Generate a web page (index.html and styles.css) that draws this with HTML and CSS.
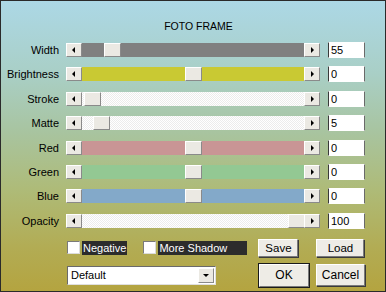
FILE: index.html
```html
<!DOCTYPE html>
<html lang="en">
<head>
  <meta charset="UTF-8">
  <title>Foto Frame</title>
  <link rel="stylesheet" href="styles.css">
</head>
<body>
  <div class="dialog">
    <h1 class="title">FOTO FRAME</h1>

    <!-- slider rows -->
    <div class="sliders">
      <div class="row">
        <span class="label">Width</span>
        <div class="scroll">
          <span class="arrow left"></span>
          <div class="track gray"><span class="thumb" style="left: 22px"></span></div>
          <span class="arrow right"></span>
        </div>
        <input class="value" type="text" value="55">
      </div>
      <div class="row">
        <span class="label">Brightness</span>
        <div class="scroll">
          <span class="arrow left"></span>
          <div class="track yellow"><span class="thumb" style="left: 103px"></span></div>
          <span class="arrow right"></span>
        </div>
        <input class="value" type="text" value="0">
      </div>
      <div class="row">
        <span class="label">Stroke</span>
        <div class="scroll">
          <span class="arrow left"></span>
          <div class="track light"><span class="thumb" style="left: 2px"></span></div>
          <span class="arrow right"></span>
        </div>
        <input class="value" type="text" value="0">
      </div>
      <div class="row">
        <span class="label">Matte</span>
        <div class="scroll">
          <span class="arrow left"></span>
          <div class="track light"><span class="thumb" style="left: 11px"></span></div>
          <span class="arrow right"></span>
        </div>
        <input class="value" type="text" value="5">
      </div>
      <div class="row">
        <span class="label">Red</span>
        <div class="scroll">
          <span class="arrow left"></span>
          <div class="track red"><span class="thumb" style="left: 103px"></span></div>
          <span class="arrow right"></span>
        </div>
        <input class="value caret" type="text" value="0">
      </div>
      <div class="row">
        <span class="label">Green</span>
        <div class="scroll">
          <span class="arrow left"></span>
          <div class="track green"><span class="thumb" style="left: 103px"></span></div>
          <span class="arrow right"></span>
        </div>
        <input class="value" type="text" value="0">
      </div>
      <div class="row">
        <span class="label">Blue</span>
        <div class="scroll">
          <span class="arrow left"></span>
          <div class="track blue"><span class="thumb" style="left: 103px"></span></div>
          <span class="arrow right"></span>
        </div>
        <input class="value" type="text" value="0">
      </div>
      <div class="row">
        <span class="label">Opacity</span>
        <div class="scroll">
          <span class="arrow left"></span>
          <div class="track light"><span class="thumb" style="left: 206px"></span></div>
          <span class="arrow right"></span>
        </div>
        <input class="value" type="text" value="100">
      </div>
    </div>

    <!-- options and buttons -->
    <div class="footer">
      <div class="line">
        <span class="check"></span>
        <span class="check-label negative">Negative</span>
        <span class="check second"></span>
        <span class="check-label shadow">More Shadow</span>
        <button class="btn save">Save</button>
        <button class="btn load">Load</button>
      </div>
      <div class="line second-line">
        <div class="select">
          <span class="select-text">Default</span>
          <span class="select-arrow"></span>
        </div>
        <button class="btn ok">OK</button>
        <button class="btn cancel">Cancel</button>
      </div>
    </div>
  </div>
</body>
</html>
```

FILE: styles.css
```css
* {
  box-sizing: border-box;
}

body {
  margin: 0;
  font-family: "Liberation Sans", Arial, sans-serif;
  font-size: 11px;
  color: #000;
}

.dialog {
  width: 386px;
  height: 292px;
  border: 1px solid #2a2a2a;
  background: linear-gradient(#acd8e6 0%, #a9cfc6 25%, #a8c4a0 45%, #aebb78 65%, #b2ac54 85%, #b4a440 100%);
  overflow: hidden;
}

.title {
  margin: 0;
  padding: 18px 0 0 11px;
  height: 32px;
  line-height: 14px;
  font-size: 10.5px;
  font-weight: normal;
  text-align: center;
}

/* slider rows */
.sliders {
  display: flex;
  flex-direction: column;
  gap: 10.4px;
  margin-top: 10px;
}

.row {
  display: flex;
  align-items: center;
  height: 14px;
}

.label {
  width: 58px;
  text-align: right;
  line-height: 14px;
}

.scroll {
  display: flex;
  width: 254px;
  height: 14px;
  margin-left: 7px;
}

.arrow {
  position: relative;
  width: 16px;
  height: 14px;
  background: #ebe9e3;
  border-top: 1px solid #fff;
  border-left: 1px solid #fff;
  border-right: 1px solid #8a8a8a;
  border-bottom: 1px solid #8a8a8a;
}

.arrow::before {
  content: "";
  position: absolute;
  top: 3px;
  left: 5px;
  border-top: 3px solid transparent;
  border-bottom: 3px solid transparent;
}

.arrow.left::before {
  border-right: 3px solid #000;
}

.arrow.right::before {
  left: 6px;
  border-left: 3px solid #000;
}

.track {
  position: relative;
  flex: 1;
}

.track.gray {
  background: #808080;
}

.track.yellow {
  background: #c9c933;
}

.track.light {
  background: repeating-conic-gradient(#fff 0 25%, #ececec 0 50%) 0 0 / 2px 2px;
}

.track.red {
  background: #c99595;
}

.track.green {
  background: #93c893;
}

.track.blue {
  background: #83a9c9;
}

.thumb {
  position: absolute;
  top: 0;
  width: 17px;
  height: 14px;
  background: #ebe9e3;
  border-top: 1px solid #fff;
  border-left: 1px solid #fff;
  border-right: 1px solid #8a8a8a;
  border-bottom: 1px solid #8a8a8a;
}

.value {
  width: 37px;
  height: 16px;
  margin-left: 8px;
  padding: 0 2px;
  font: inherit;
  line-height: 14px;
  background: #fff;
  border: 1px solid #fff;
  border-left-color: #3a3a3a;
  border-right-color: #6a6a6a;
  outline: none;
}

/* footer: checkboxes, preset list and buttons */
.footer {
  margin-top: 11px;
  padding-left: 66px;
}

.line {
  display: flex;
  align-items: center;
  height: 18px;
}

.check {
  width: 13px;
  height: 13px;
  background: #fff;
  border-top: 1px solid #7a7a7a;
  border-left: 1px solid #7a7a7a;
  border-right: 1px solid #dcdcdc;
  border-bottom: 1px solid #dcdcdc;
}

.check.second {
  margin-left: 16px;
}

.check-label {
  margin-left: 2px;
  padding: 0 1px;
  height: 14px;
  line-height: 14px;
  color: #fff;
  background: #2c2c2c;
}

.check-label.shadow {
  width: 89px;
}

.btn {
  height: 18px;
  padding: 0;
  font: inherit;
  font-size: 11.5px;
  color: #000;
  background: #eeece6;
  border: 1px solid #fff;
  border-right-color: #7a7a7a;
  border-bottom-color: #7a7a7a;
  box-shadow: 1px 1px 0 #3a3a3a;
}

.btn.save {
  width: 40px;
  margin-left: 11px;
}

.btn.load {
  width: 48px;
  margin-left: 18px;
}

.second-line {
  height: 23px;
  margin-top: 7px;
}

.select {
  display: flex;
  align-items: center;
  width: 149px;
  height: 19px;
  background: #fff;
  border-top: 1px solid #6a6a6a;
  border-left: 1px solid #6a6a6a;
  border-right: 1px solid #e0e0e0;
  border-bottom: 1px solid #e0e0e0;
}

.select-text {
  flex: 1;
  padding-left: 3px;
}

.select-arrow {
  position: relative;
  width: 16px;
  height: 15px;
  margin-right: 1px;
  background: #ebe9e3;
  border-top: 1px solid #fff;
  border-left: 1px solid #fff;
  border-right: 1px solid #8a8a8a;
  border-bottom: 1px solid #8a8a8a;
}

.select-arrow::before {
  content: "";
  position: absolute;
  top: 5px;
  left: 4px;
  border-left: 3px solid transparent;
  border-right: 3px solid transparent;
  border-top: 3px solid #000;
}

.btn.ok {
  width: 50px;
  height: 23px;
  margin-left: 43px;
  font-size: 12px;
  outline: 1px solid #1a1a1a;
  outline-offset: 0;
}

.btn.cancel {
  width: 49px;
  height: 22px;
  margin-left: 7px;
  font-size: 12px;
}
```
